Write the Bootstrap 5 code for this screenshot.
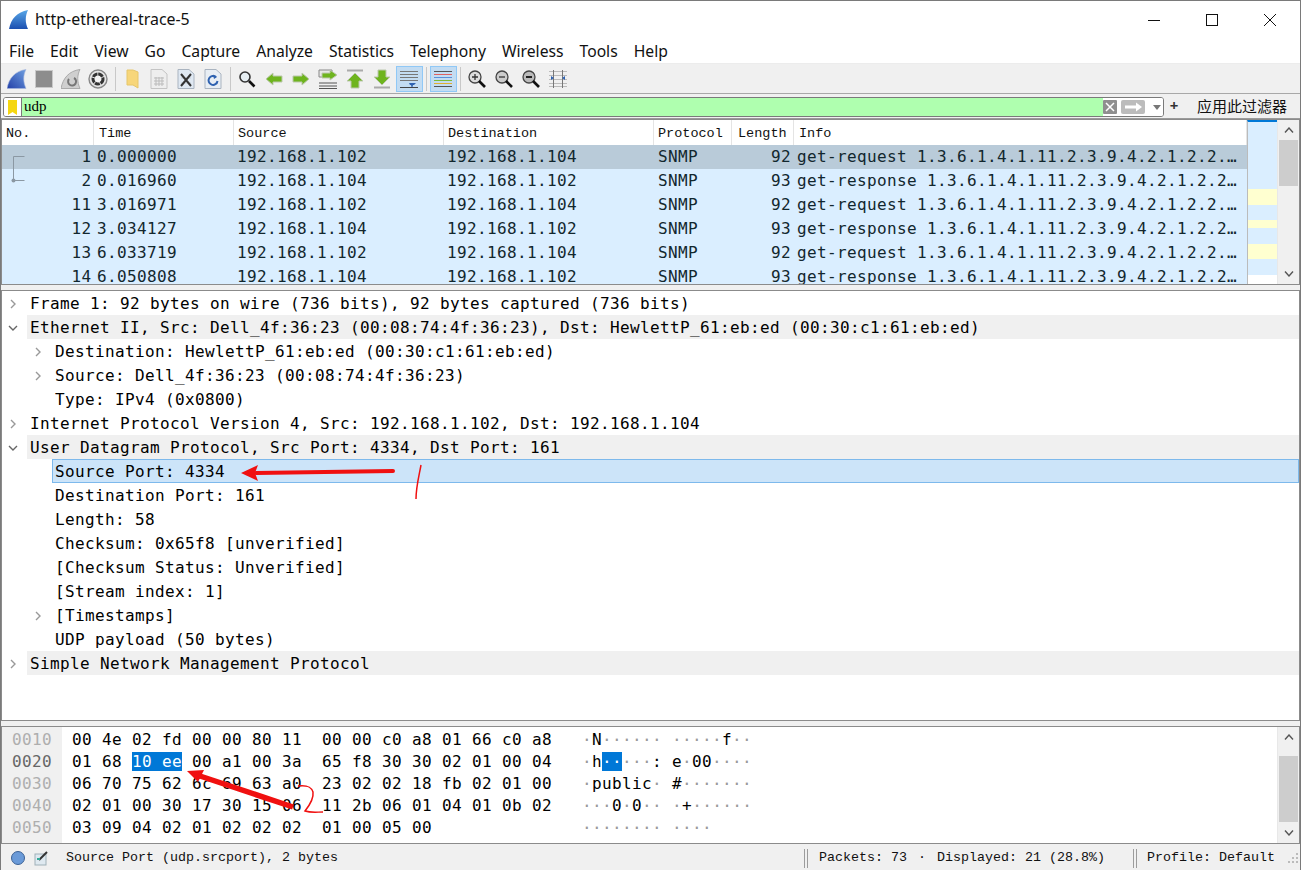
<!DOCTYPE html>
<html lang="en"><head><meta charset="utf-8"><title>http-ethereal-trace-5</title>
<link href="https://cdn.jsdelivr.net/npm/bootstrap@5.3.0/dist/css/bootstrap.min.css" rel="stylesheet">
<style>
html,body{margin:0;height:870px;overflow:hidden;background:#fff}
.win{position:relative;width:1301px;height:870px;border:1px solid #7a7a7a;border-bottom:0;background:#f0f0f0;font-family:"Noto Sans",sans-serif;overflow:hidden;color:#000}
.titlebar{height:37px;background:#fff;font-size:15.9px;color:#111;flex:none}
.titlebar .ttl{margin-left:6px}
.winbtns{margin-right:1px}
.winbtns svg{display:block}
.winbtn{width:58px;height:37px}
.menubar{height:26px;background:#fff;border-bottom:1px solid #ececec;font-size:15.7px;flex:none}
.menubar .nav-link{padding:0 8px;color:#111;line-height:26px}
.toolbar{height:30px;padding:1px 0 0 2.5px;border-bottom:1px solid #a8a8a8;flex:none}
.tb{width:27px;height:26px;flex:none}
.tb.on{background:#c3dcf2;border:1px solid #90c8f6}
.tsep{width:7px;flex:none;height:24px;position:relative}
.tsep::after{content:"";position:absolute;left:3px;top:0;bottom:0;width:1px;background:#c8c8c8}
.filterbar{height:25px;padding:3px 0 0 2px;border-bottom:1px solid #9a9a9a;flex:none}
.fbox{width:1161px;height:20px;border:1px solid #7a7a7a;border-radius:3px;background:#fff;overflow:hidden}
.fmark{width:18px;height:100%;border-right:1px solid #7a7a7a;background:#fff}
.finput{flex:1;height:100%;background:#afffaf;line-height:17px;padding-left:2px;font-family:"Liberation Serif",serif;font-size:15px}
.fbtns{width:60px;height:100%;background:#fff}
.fapply{font-family:"Noto Sans CJK SC",sans-serif;font-size:15px;line-height:17px;margin-left:13px;color:#111}
.fplus{font-size:15px;font-weight:700;color:#333;width:20px;text-align:center;line-height:17px}
.pane{background:#fff;border:1px solid #8b8b8b}
.mono{font-family:"DejaVu Sans Mono",monospace;font-size:16px;letter-spacing:.368px;color:#12272e}
.small-mono{font-family:"Liberation Mono",monospace;font-size:13.5px;white-space:pre;color:#111}
.plist{height:166px;flex:none}
.pcols{width:1245px;overflow:hidden}
.phead{height:25px;background:#fff}
.phead>span{line-height:25px;padding:1px 0 0 4px;border-right:1px solid #e4e4e4;height:25px;display:block}
.phead .c2{padding-left:5px}.phead .c6{padding-left:6px}.phead .c7{padding-left:5px}
.c1{width:92px;flex:none}.c2{width:140px;flex:none}.c3{width:210px;flex:none}.c4{width:210px;flex:none}.c5{width:78px;flex:none}.c6{width:62px;flex:none}.c7{flex:1;min-width:0}
.prow{height:24px;line-height:24px;background:#daeeff;position:relative}
.prow.sel{background:#b9cbd9}
.prow>span{display:block;overflow:hidden;white-space:pre}
.c1.num{text-align:right;padding-right:2.5px}
.pbody .c2,.pbody .c3,.pbody .c4,.pbody .c7{padding-left:3px}
.pbody .c5{padding-left:4px}
.pbody .c6{text-align:right;padding-right:3px}
.pbody{height:139px;overflow:hidden;position:relative}
.thread{position:absolute;left:0;top:0}
.minimap{width:30px;flex:none;background:#daeeff;border-top:2px solid #0078d7;border-left:1px solid #bbb;position:relative}
.band{position:absolute;left:0;right:0;background:#ffffd0}
.vbar{width:22px;flex:none;background:#f0f0f0;border-left:1px solid #e8e8e8}
.varr{height:20px;flex:none}
.vtrack{flex:1;position:relative}
.vthumb{position:absolute;left:1px;right:1px;background:#cdcdcd}
.split{height:5px;flex:none}
.dlist{height:431px;flex:none}
.drow{height:24px;line-height:24px;position:relative;color:#000;white-space:pre}
.drow .txt{position:absolute;top:0;bottom:0;right:0;padding:1px 0 0 3px}
.drow.l0 .txt{left:25px}
.drow.top .txt{background:#f0f0f0}
.drow.l1 .txt{left:50px}
.drow.cur .txt{background:#cce4f9;border:1px solid #7db9ec;line-height:22px;padding:1px 0 0 2px}
.drow svg{position:absolute;top:8px}
.drow.l0 svg{left:6px}.drow.l1 svg{left:31px}
.hexp{height:118px;flex:none}
.hexin{flex:1;min-width:0}
.gut{width:60px;flex:none;background:#f0f0f0;padding-left:10px}
.hrow{height:22px;line-height:22px;color:#000;white-space:pre}
.gut,.hexc,.ascc{padding-top:2px}
.gut .hrow{color:#aeaeae}
.gut .hrow.act{color:#666}
.hexc{padding-left:10px;width:520px;flex:none}
.hexsel{background:#0078d7;color:#fff}
.dot{color:#9a9a9a}
.statusbar{height:26px;flex:none;padding-top:2px;font-size:13.33px}
.st-l{padding-left:5px;flex:1}
.vsep{width:4px;height:19px;border-left:1px solid #9c9c9c;border-right:1px solid #9c9c9c;flex:none}
.st-pk{margin:0 28px 0 11px}
.st-dot{padding:0 3px}
.st-pr{margin:0 9px 0 10px}
.overlay{position:absolute;left:-1px;top:-1px;pointer-events:none}
</style></head><body>
<div class="win d-flex flex-column">
 <div class="titlebar d-flex align-items-center">
  <svg class="ms-2" width="20" height="20" viewBox="0 0 20 20"><defs><linearGradient id="fin" x1="0" y1="0" x2="0" y2="1"><stop offset="0" stop-color="#5aa8e8"/><stop offset="1" stop-color="#1b4fb0"/></linearGradient></defs><path d="M0 19C2 9 8 2 19 0C16 6 16 13 19 19Z" fill="url(#fin)"/></svg>
  <span class="ttl">http-ethereal-trace-5</span>
  <div class="winbtns d-flex ms-auto">
   <div class="winbtn d-flex align-items-center justify-content-center"><svg width="12" height="12"><path d="M0 6.500H12" stroke="#111"/></svg></div>
   <div class="winbtn d-flex align-items-center justify-content-center"><svg width="12" height="12"><rect x=".5" y=".5" width="11" height="11" fill="none" stroke="#111"/></svg></div>
   <div class="winbtn d-flex align-items-center justify-content-center"><svg width="12" height="12"><path d="M0 0L12 12M12 0L0 12" stroke="#111"/></svg></div>
  </div>
 </div>
 <ul class="menubar nav flex-nowrap">
  <li class="nav-item"><a class="nav-link">File</a></li><li class="nav-item"><a class="nav-link">Edit</a></li><li class="nav-item"><a class="nav-link">View</a></li><li class="nav-item"><a class="nav-link">Go</a></li><li class="nav-item"><a class="nav-link">Capture</a></li><li class="nav-item"><a class="nav-link">Analyze</a></li><li class="nav-item"><a class="nav-link">Statistics</a></li><li class="nav-item"><a class="nav-link">Telephony</a></li><li class="nav-item"><a class="nav-link">Wireless</a></li><li class="nav-item"><a class="nav-link">Tools</a></li><li class="nav-item"><a class="nav-link">Help</a></li>
 </ul>
 <div class="toolbar d-flex align-items-center">
  <div class="tb d-flex align-items-center justify-content-center"><svg width="20" height="20" viewBox="0 0 20 20"><defs><linearGradient id="fin2" x1="1" y1="0" x2="0" y2="1"><stop offset="0" stop-color="#6f9fe0"/><stop offset="1" stop-color="#2340a8"/></linearGradient></defs><path d="M0 19.500C2 9 8 2 19 .5C16 6 16 13 19 19.500Z" fill="url(#fin2)" stroke="#a9b8de" stroke-width=".6"/></svg></div>
  <div class="tb d-flex align-items-center justify-content-center"><svg width="18" height="18"><rect x=".5" y=".5" width="17" height="17" fill="#8d8d8d" stroke="#c9c9c9"/></svg></div>
  <div class="tb d-flex align-items-center justify-content-center"><svg width="20" height="20" viewBox="0 0 20 20"><path d="M0 19.500C2 9 8 2 19 .5C16 6 16 13 19 19.500Z" fill="#cfcfcf" stroke="#aaa"/><path d="M13 9A4 4 0 1 1 8 10" fill="none" stroke="#777" stroke-width="2"/></svg></div>
  <div class="tb d-flex align-items-center justify-content-center"><svg width="20" height="20"><circle cx="10" cy="10" r="9" fill="#e6e6e6" stroke="#888" stroke-width="1.400"/><circle cx="10" cy="10" r="5" fill="#f4f4f4" stroke="#333" stroke-width="3" stroke-dasharray="5 .8"/></svg></div>
  <div class="tsep"></div>
  <div class="tb d-flex align-items-center justify-content-center"><svg width="13" height="20"><path d="M1 1H7L12 3V19L7 16H1Z" fill="#f7d67a" stroke="#e6c66a"/></svg></div>
  <div class="tb d-flex align-items-center justify-content-center"><svg width="18" height="20"><path d="M1 .5H12L17 5V19.500H1Z" fill="#eee" stroke="#c4c4c4"/><path d="M4 9H14M4 12H14M4 15H14M6 8V17M9 8V17M12 8V17" stroke="#bbb"/></svg></div>
  <div class="tb d-flex align-items-center justify-content-center"><svg width="18" height="20"><path d="M1 .5H12L17 5V19.500H1Z" fill="#dfe8f2" stroke="#aab4c0"/><path d="M4 9H14M4 14H14" stroke="#c5ced6"/><path d="M4 5L14 17M14 5L4 17" stroke="#333" stroke-width="2"/></svg></div>
  <div class="tb d-flex align-items-center justify-content-center"><svg width="18" height="20"><path d="M1 .5H12L17 5V19.500H1Z" fill="#e8eef4" stroke="#aab4c0"/><path d="M12 8A4.500 4.500 0 1 0 13.500 12" fill="none" stroke="#2f62b0" stroke-width="2"/><path d="M9 5.500L13 8L10 10Z" fill="#2f62b0"/></svg></div>
  <div class="tsep"></div>
  <div class="tb d-flex align-items-center justify-content-center"><svg width="18" height="18"><circle cx="7" cy="7" r="5" fill="#e6eef2" stroke="#333" stroke-width="1.600"/><path d="M11 11L16.500 16.500" stroke="#111" stroke-width="2.600"/></svg></div>
  <div class="tb d-flex align-items-center justify-content-center"><svg width="18" height="14"><path d="M1 7L8 1V4H17V10H8V13Z" fill="#6eb41e" stroke="#bcc8ae"/></svg></div>
  <div class="tb d-flex align-items-center justify-content-center"><svg width="18" height="14"><path d="M17 7L10 1V4H1V10H10V13Z" fill="#6eb41e" stroke="#bcc8ae"/></svg></div>
  <div class="tb d-flex align-items-center justify-content-center"><svg width="20" height="20"><path d="M1 14H19M1 17H19M1 19.500H19" stroke="#555"/><path d="M1 1H14V8H1Z" fill="#e8e8e8" stroke="#888"/><path d="M19 6L12 1V4H4V9H12V11Z" fill="#6eb41e" stroke="#bcc8ae"/></svg></div>
  <div class="tb d-flex align-items-center justify-content-center"><svg width="18" height="20"><path d="M1 1.500H17" stroke="#aaa" stroke-width="2"/><path d="M9 4L17 12H13V19H5V12H1Z" fill="#6eb41e" stroke="#bcc8ae"/></svg></div>
  <div class="tb d-flex align-items-center justify-content-center"><svg width="18" height="20"><path d="M1 18.500H17" stroke="#aaa" stroke-width="2"/><path d="M9 16L17 8H13V1H5V8H1Z" fill="#6eb41e" stroke="#bcc8ae"/></svg></div>
  <div class="tb on d-flex align-items-center justify-content-center"><svg width="20" height="20"><path d="M1 2.500H19M1 5.500H19M1 8.500H19M1 11.500H19" stroke="#777"/><path d="M1 18.500H19" stroke="#444"/><path d="M10 14H17L15 16H14L13.500 18H12.500L12 16H11Z" fill="#2f62b0"/></svg></div>
  <div class="tsep"></div>
  <div class="tb on d-flex align-items-center justify-content-center"><svg width="20" height="18"><path d="M1 1.500H19" stroke="#555"/><path d="M1 4.500H19" stroke="#e06060"/><path d="M1 7.500H19" stroke="#5b8fd8"/><path d="M1 10.500H19" stroke="#7dbb3a"/><path d="M1 13.500H19" stroke="#e0b030"/><path d="M1 16.500H19" stroke="#555"/></svg></div>
  <div class="tsep"></div>
  <div class="tb d-flex align-items-center justify-content-center"><svg width="18" height="18"><circle cx="7" cy="7" r="6" fill="#ddd" stroke="#444" stroke-width="1.300"/><path d="M4 7H10M7 4V10" stroke="#333" stroke-width="1.300"/><path d="M11 11L17 17" stroke="#111" stroke-width="2.600"/></svg></div>
  <div class="tb d-flex align-items-center justify-content-center"><svg width="18" height="18"><circle cx="7" cy="7" r="6" fill="#ccc" stroke="#444" stroke-width="1.300"/><path d="M4 7H10" stroke="#333" stroke-width="1.300"/><path d="M11 11L17 17" stroke="#111" stroke-width="2.600"/></svg></div>
  <div class="tb d-flex align-items-center justify-content-center"><svg width="18" height="18"><circle cx="7" cy="7" r="6" fill="#bbb" stroke="#444" stroke-width="1.300"/><path d="M4 7H10" stroke="#222" stroke-width="2"/><path d="M11 11L17 17" stroke="#111" stroke-width="2.600"/></svg></div>
  <div class="tb d-flex align-items-center justify-content-center"><svg width="18" height="18"><path d="M0 1.500H18M0 5.500H18M0 9.500H18M0 13.500H18M0 16.500H18" stroke="#bbb"/><path d="M4.500 0V18M13.500 0V18" stroke="#777"/><path d="M2 6L5 8L2 10ZM16 6L13 8L16 10Z" fill="#2f62b0"/></svg></div>
 </div>
 <div class="filterbar d-flex align-items-start">
  <div class="fbox d-flex align-items-center">
   <div class="fmark d-flex align-items-center justify-content-center"><svg width="9" height="15"><path d="M0 0H9V15L4.500 12L0 15Z" fill="#f5d60f"/></svg></div>
   <div class="finput">udp</div>
   <div class="fbtns d-flex align-items-center">
    <svg width="14" height="14"><rect width="14" height="14" rx="1" fill="#8f8f8f"/><path d="M3 3L11 11M11 3L3 11" stroke="#fff" stroke-width="1.500"/></svg>
    <svg width="24" height="14" class="ms-1"><rect width="24" height="14" rx="2" fill="#bcbcbc"/><path d="M4 7H16" stroke="#fff" stroke-width="3"/><path d="M15 2.500L21 7L15 11.500Z" fill="#fff"/></svg>
    <svg width="8" height="5" class="ms-2"><path d="M0 0H8L4 5Z" fill="#777"/></svg>
   </div>
  </div>
  <div class="fplus">+</div>
  <div class="fapply">应用此过滤器</div>
 </div>
 <div class="pane plist d-flex">
  <div class="pcols">
   <div class="phead d-flex small-mono"><span class="c1">No.</span><span class="c2">Time</span><span class="c3">Source</span><span class="c4">Destination</span><span class="c5">Protocol</span><span class="c6">Length</span><span class="c7">Info</span></div>
   <div class="pbody mono">
    <div class="prow sel d-flex"><span class="c1 num">1</span><span class="c2">0.000000</span><span class="c3">192.168.1.102</span><span class="c4">192.168.1.104</span><span class="c5">SNMP</span><span class="c6">92</span><span class="c7">get-request 1.3.6.1.4.1.11.2.3.9.4.2.1.2.2.…</span></div>
    <div class="prow d-flex"><span class="c1 num">2</span><span class="c2">0.016960</span><span class="c3">192.168.1.104</span><span class="c4">192.168.1.102</span><span class="c5">SNMP</span><span class="c6">93</span><span class="c7">get-response 1.3.6.1.4.1.11.2.3.9.4.2.1.2.2…</span></div>
    <div class="prow d-flex"><span class="c1 num">11</span><span class="c2">3.016971</span><span class="c3">192.168.1.102</span><span class="c4">192.168.1.104</span><span class="c5">SNMP</span><span class="c6">92</span><span class="c7">get-request 1.3.6.1.4.1.11.2.3.9.4.2.1.2.2.…</span></div>
    <div class="prow d-flex"><span class="c1 num">12</span><span class="c2">3.034127</span><span class="c3">192.168.1.104</span><span class="c4">192.168.1.102</span><span class="c5">SNMP</span><span class="c6">93</span><span class="c7">get-response 1.3.6.1.4.1.11.2.3.9.4.2.1.2.2…</span></div>
    <div class="prow d-flex"><span class="c1 num">13</span><span class="c2">6.033719</span><span class="c3">192.168.1.102</span><span class="c4">192.168.1.104</span><span class="c5">SNMP</span><span class="c6">92</span><span class="c7">get-request 1.3.6.1.4.1.11.2.3.9.4.2.1.2.2.…</span></div>
    <div class="prow d-flex"><span class="c1 num">14</span><span class="c2">6.050808</span><span class="c3">192.168.1.104</span><span class="c4">192.168.1.102</span><span class="c5">SNMP</span><span class="c6">93</span><span class="c7">get-response 1.3.6.1.4.1.11.2.3.9.4.2.1.2.2…</span></div>
    <svg class="thread" width="30" height="48"><path d="M22.500 11.500H11.500V35.500H22.500" fill="none" stroke="#8b98a3"/><circle cx="11.500" cy="35.500" r="2" fill="#8b98a3"/></svg>
   </div>
  </div>
  <div class="minimap"><div class="band" style="top:67px;height:16px"></div><div class="band" style="top:98px;height:8px"></div><div class="band" style="top:122px;height:15px"></div><div class="band" style="top:153px;height:9px;background:#fff"></div></div>
  <div class="vbar d-flex flex-column"><div class="varr d-flex align-items-center justify-content-center"><svg width="10" height="6"><path d="M1 5.500L5 1L9 5.500" fill="none" stroke="#555" stroke-width="1.400"/></svg></div><div class="vtrack"><div class="vthumb" style="top:0;height:46px"></div></div><div class="varr d-flex align-items-center justify-content-center"><svg width="10" height="6"><path d="M1 .5L5 5L9 .5" fill="none" stroke="#555" stroke-width="1.400"/></svg></div></div>
 </div>
 <div class="split"></div>
 <div class="pane dlist mono">
  <div class="drow l0"><svg width="10" height="10"><path d="M3 1L7 5L3 9" fill="none" stroke="#999" stroke-width="1.400"/></svg><div class="txt">Frame 1: 92 bytes on wire (736 bits), 92 bytes captured (736 bits)</div></div>
  <div class="drow l0 top"><svg width="10" height="10"><path d="M1 3L5 7L9 3" fill="none" stroke="#666" stroke-width="1.400"/></svg><div class="txt">Ethernet II, Src: Dell_4f:36:23 (00:08:74:4f:36:23), Dst: HewlettP_61:eb:ed (00:30:c1:61:eb:ed)</div></div>
  <div class="drow l1"><svg width="10" height="10"><path d="M3 1L7 5L3 9" fill="none" stroke="#999" stroke-width="1.400"/></svg><div class="txt">Destination: HewlettP_61:eb:ed (00:30:c1:61:eb:ed)</div></div>
  <div class="drow l1"><svg width="10" height="10"><path d="M3 1L7 5L3 9" fill="none" stroke="#999" stroke-width="1.400"/></svg><div class="txt">Source: Dell_4f:36:23 (00:08:74:4f:36:23)</div></div>
  <div class="drow l1"><div class="txt">Type: IPv4 (0x0800)</div></div>
  <div class="drow l0"><svg width="10" height="10"><path d="M3 1L7 5L3 9" fill="none" stroke="#999" stroke-width="1.400"/></svg><div class="txt">Internet Protocol Version 4, Src: 192.168.1.102, Dst: 192.168.1.104</div></div>
  <div class="drow l0 top"><svg width="10" height="10"><path d="M1 3L5 7L9 3" fill="none" stroke="#666" stroke-width="1.400"/></svg><div class="txt">User Datagram Protocol, Src Port: 4334, Dst Port: 161</div></div>
  <div class="drow l1 cur"><div class="txt">Source Port: 4334</div></div>
  <div class="drow l1"><div class="txt">Destination Port: 161</div></div>
  <div class="drow l1"><div class="txt">Length: 58</div></div>
  <div class="drow l1"><div class="txt">Checksum: 0x65f8 [unverified]</div></div>
  <div class="drow l1"><div class="txt">[Checksum Status: Unverified]</div></div>
  <div class="drow l1"><div class="txt">[Stream index: 1]</div></div>
  <div class="drow l1"><svg width="10" height="10"><path d="M3 1L7 5L3 9" fill="none" stroke="#999" stroke-width="1.400"/></svg><div class="txt">[Timestamps]</div></div>
  <div class="drow l1"><div class="txt">UDP payload (50 bytes)</div></div>
  <div class="drow l0 top"><svg width="10" height="10"><path d="M3 1L7 5L3 9" fill="none" stroke="#999" stroke-width="1.400"/></svg><div class="txt">Simple Network Management Protocol</div></div>
 </div>
 <div class="split"></div>
 <div class="pane hexp d-flex mono">
  <div class="gut"><div class="hrow">0010</div><div class="hrow act">0020</div><div class="hrow">0030</div><div class="hrow">0040</div><div class="hrow">0050</div></div>
  <div class="hexc"><div class="hrow">00 4e 02 fd 00 00 80 11  00 00 c0 a8 01 66 c0 a8</div><div class="hrow">01 68 <span class="hexsel">10 ee</span> 00 a1 00 3a  65 f8 30 30 02 01 00 04</div><div class="hrow">06 70 75 62 6c 69 63 a0  23 02 02 18 fb 02 01 00</div><div class="hrow">02 01 00 30 17 30 15 06  11 2b 06 01 04 01 0b 02</div><div class="hrow">03 09 04 02 01 02 02 02  01 00 05 00</div></div>
  <div class="ascc hexin"><div class="hrow"><span class="dot">·</span>N<span class="dot">······</span> <span class="dot">·····</span>f<span class="dot">··</span></div><div class="hrow"><span class="dot">·</span>h<span class="hexsel">··</span><span class="dot">···</span>: e<span class="dot">·</span>00<span class="dot">····</span></div><div class="hrow"><span class="dot">·</span>public<span class="dot">·</span> #<span class="dot">·······</span></div><div class="hrow"><span class="dot">···</span>0<span class="dot">·</span>0<span class="dot">··</span> <span class="dot">·</span>+<span class="dot">······</span></div><div class="hrow"><span class="dot">········</span> <span class="dot">····</span></div></div>
  <div class="vbar d-flex flex-column"><div class="varr d-flex align-items-center justify-content-center"><svg width="10" height="6"><path d="M1 5.500L5 1L9 5.500" fill="none" stroke="#555" stroke-width="1.400"/></svg></div><div class="vtrack"><div class="vthumb" style="top:9px;height:66px"></div></div><div class="varr d-flex align-items-center justify-content-center"><svg width="10" height="6"><path d="M1 .5L5 5L9 .5" fill="none" stroke="#555" stroke-width="1.400"/></svg></div></div>
 </div>
 <div class="statusbar d-flex align-items-center small-mono">
  <div class="st-l d-flex align-items-center">
   <svg width="16" height="16" class="ms-1"><circle cx="8" cy="8" r="6.500" fill="#6a9ad8" stroke="#3c6296"/></svg>
   <svg width="16" height="16" class="ms-2"><rect x="1" y="4" width="11" height="11" fill="#dfe9f0" stroke="#9fb0b8"/><path d="M5 10L13 2" stroke="#333" stroke-width="2"/><path d="M3 9L6 9" stroke="#3a9" stroke-width="2"/></svg>
   <span class="ms-3">Source Port (udp.srcport), 2 bytes</span>
  </div>
  <div class="vsep"></div><span class="st-pk">Packets: 73 <span class="st-dot">·</span> Displayed: 21 (28.8%)</span>
  <div class="vsep"></div><span class="st-pr">Profile: Default</span>
  <svg width="16" height="16"><path d="M12 3h2v2h-2zM8 7h2v2H8zM12 7h2v2h-2zM4 11h2v2H4zM8 11h2v2H8zM12 11h2v2h-2z" fill="#bbb"/></svg>
 </div>
 <svg class="overlay" width="1301" height="870" viewBox="0 0 1301 870">
  <path d="M393 471L256 473" stroke="#f01010" stroke-width="4" stroke-linecap="round"/><path d="M241 473L258 465L255 473L258 481Z" fill="#f01010"/>
  <path d="M421 465C419 476 416 487 416 499" fill="none" stroke="#f01010" stroke-width="1.500"/>
  <path d="M293 807L197 775" stroke="#f01010" stroke-width="5.500"/><path d="M187 771L204 770L198 782Z" fill="#f01010"/>
  <path d="M298 786C306 785 311 786 313 792C314 799 309 806 305 811C311 813 317 812 323 812" fill="none" stroke="#f01010" stroke-width="1.500"/>
 </svg>
</div>
</body></html>
